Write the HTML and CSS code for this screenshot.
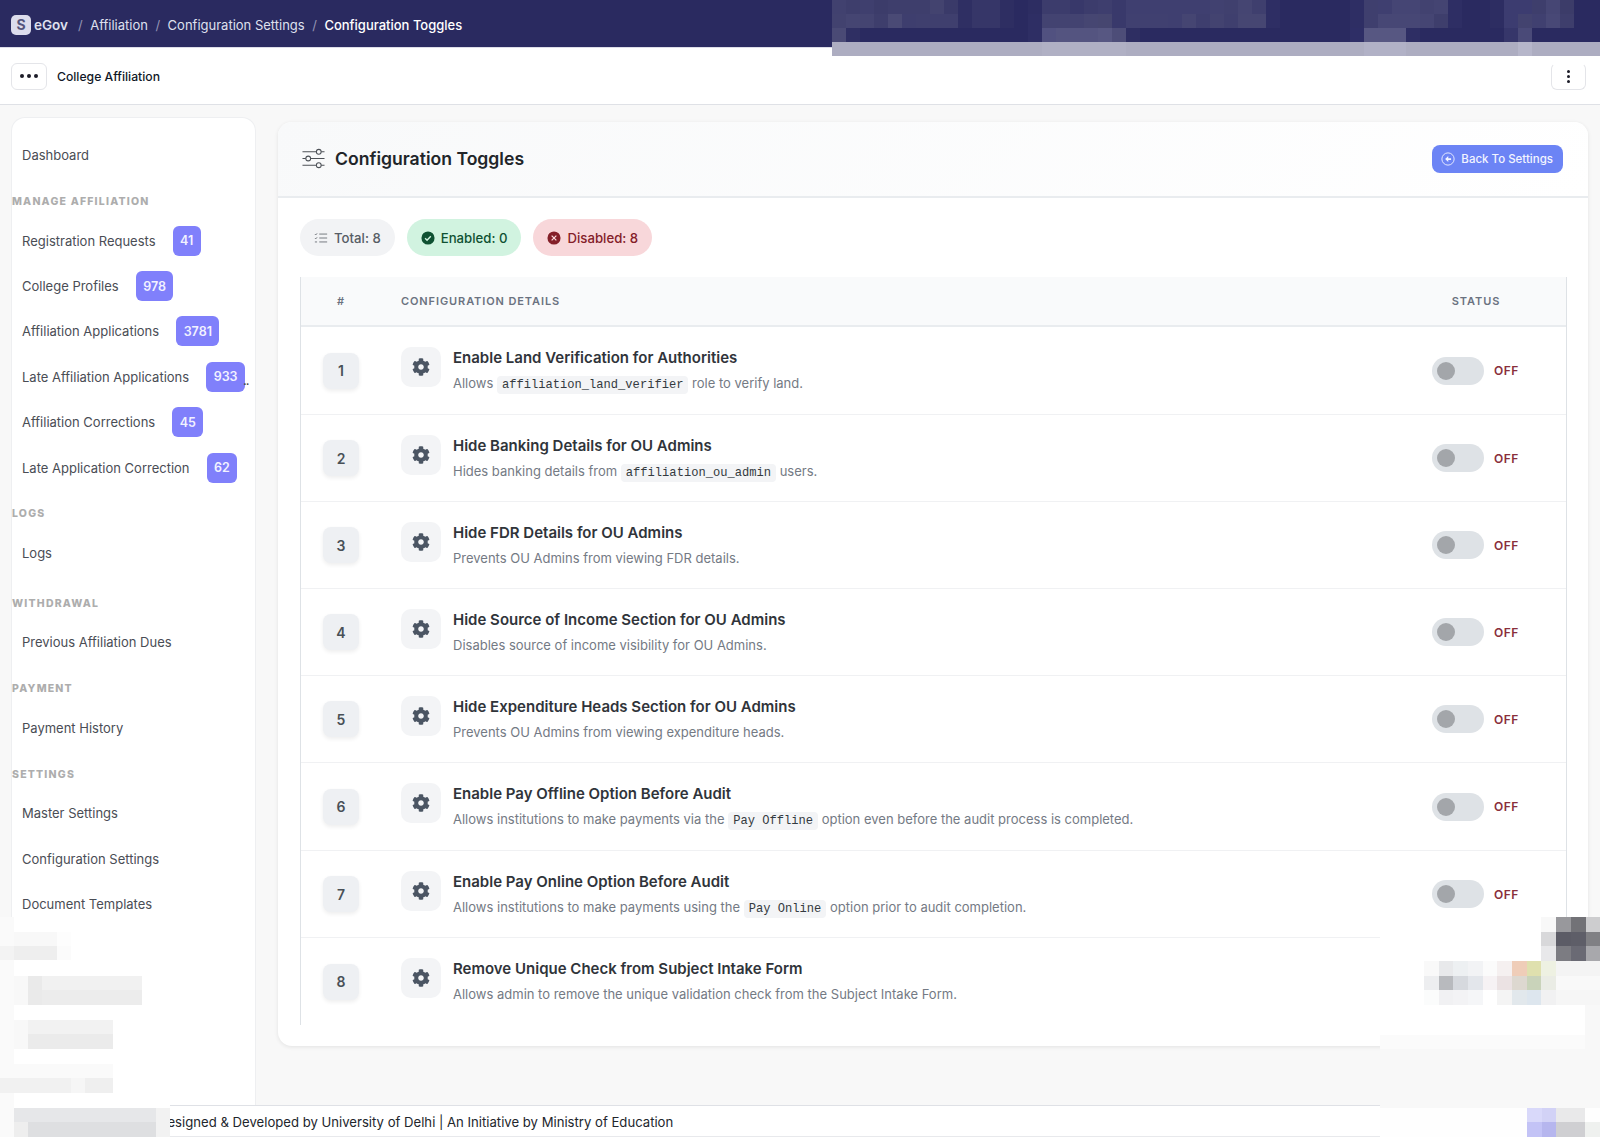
FILE: index.html
```html
<!DOCTYPE html>
<html lang="en">
<head>
<meta charset="utf-8">
<title>Configuration Toggles</title>
<link rel="stylesheet" href="styles.css">
</head>
<body>
<svg class="sprite" aria-hidden="true">
  <symbol id="gear" viewBox="0 0 512 512"><path fill="currentColor" fill-rule="evenodd" d="M487.4 315.7l-42.6-24.6c4.3-23.2 4.3-47 0-70.2l42.6-24.6c4.9-2.8 7.1-8.6 5.5-14-11.1-35.6-30-67.8-54.7-94.6-3.8-4.1-10-5.1-14.8-2.3L380.8 110c-17.9-15.4-38.5-27.3-60.8-35.1V25.8c0-5.6-3.9-10.5-9.4-11.7-36.7-8.2-74.3-7.8-109.2 0-5.5 1.2-9.4 6.1-9.4 11.7V75c-22.2 7.9-42.8 19.8-60.8 35.1L88.7 85.5c-4.9-2.8-11-1.9-14.8 2.3-24.7 26.7-43.6 58.9-54.7 94.6-1.7 5.4.6 11.2 5.5 14L67.3 221c-4.3 23.2-4.3 47 0 70.2l-42.6 24.6c-4.9 2.8-7.1 8.6-5.5 14 11.1 35.6 30 67.8 54.7 94.6 3.8 4.1 10 5.1 14.8 2.3l42.6-24.6c17.9 15.4 38.5 27.3 60.8 35.1v49.2c0 5.6 3.9 10.5 9.4 11.7 36.7 8.2 74.3 7.8 109.2 0 5.5-1.2 9.4-6.1 9.4-11.7v-49.2c22.2-7.9 42.8-19.8 60.8-35.1l42.6 24.6c4.9 2.8 11 1.9 14.8-2.3 24.7-26.7 43.6-58.9 54.7-94.6 1.5-5.5-.7-11.3-5.6-14.1zM256 336c-44.1 0-80-35.9-80-80s35.9-80 80-80 80 35.9 80 80-35.9 80-80 80z"/></symbol>
</svg>

<header class="topbar">
  <div class="brand"><span class="brand-mark">S</span><span class="brand-name">eGov</span></div>
  <nav class="crumbs">
    <span class="sep">/</span><span>Affiliation</span>
    <span class="sep">/</span><span>Configuration Settings</span>
    <span class="sep">/</span><span class="crumb-now">Configuration Toggles</span>
  </nav>
</header>

<div class="subbar">
  <button class="dots-btn"><i></i><i></i><i></i></button>
  <span class="app-name">College Affiliation</span>
  <button class="kebab-btn"><i></i><i></i><i></i></button>
</div>

<div class="shell">
  <aside class="sidebar">
    <a class="nav-item first">Dashboard</a>
    <div class="nav-head">MANAGE AFFILIATION</div>
    <a class="nav-item">Registration Requests<span class="badge">41</span></a>
    <a class="nav-item">College Profiles<span class="badge">978</span></a>
    <a class="nav-item">Affiliation Applications<span class="badge">3781</span></a>
    <a class="nav-item">Late Affiliation Applications<span class="badge">933</span><span class="more">..</span></a>
    <a class="nav-item">Affiliation Corrections<span class="badge">45</span></a>
    <a class="nav-item">Late Application Correction<span class="badge">62</span></a>
    <div class="nav-head">LOGS</div>
    <a class="nav-item">Logs</a>
    <div class="nav-head wide">WITHDRAWAL</div>
    <a class="nav-item">Previous Affiliation Dues</a>
    <div class="nav-head">PAYMENT</div>
    <a class="nav-item">Payment History</a>
    <div class="nav-head">SETTINGS</div>
    <a class="nav-item">Master Settings</a>
    <a class="nav-item">Configuration Settings</a>
    <a class="nav-item">Document Templates</a>
  </aside>

  <main class="content">
    <section class="card">
      <div class="card-head">
        <div class="card-title">
          <svg class="title-icon" viewBox="0 0 24 24" fill="none" stroke="currentColor" stroke-width="1.1"><path d="M0.5 5H15M20 5h3.5M0.5 12H4M9 12h14.500M0.500 19H15M20 19h3.500"/><circle cx="17.500" cy="5" r="2.500"/><circle cx="6.500" cy="12" r="2.500"/><circle cx="17.500" cy="19" r="2.500"/></svg>
          <h1>Configuration Toggles</h1>
        </div>
        <a class="back-btn">
          <svg viewBox="0 0 16 16" fill="none" stroke="currentColor" stroke-width="1"><circle cx="8" cy="8" r="7"/><path fill="currentColor" stroke="none" d="M8.300 4.700v2.300h3.200v2H8.300v2.300L4.700 8z"/></svg>
          Back To Settings
        </a>
      </div>
      <div class="card-body">
        <div class="pills">
          <span class="pill pill-total">
            <svg viewBox="0 0 16 16" fill="none" stroke="currentColor" stroke-width="1.100"><path d="M6 3.500h9M6 8h9M6 12.500h9M1 3.500l1 1 1.500-1.800M1 8l1 1 1.500-1.800M1 12.500h2.500" /></svg>
            Total: 8</span>
          <span class="pill pill-on">
            <svg viewBox="0 0 16 16"><circle cx="8" cy="8" r="7.500" fill="currentColor"/><path d="M4.700 8.300l2.200 2.200 4.300-4.500" fill="none" stroke="#d1f3e0" stroke-width="1.600"/></svg>
            Enabled: 0</span>
          <span class="pill pill-off">
            <svg viewBox="0 0 16 16"><circle cx="8" cy="8" r="7.500" fill="currentColor"/><path d="M5.300 5.300l5.400 5.400M10.700 5.300l-5.400 5.400" fill="none" stroke="#f8d7da" stroke-width="1.400"/></svg>
            Disabled: 8</span>
        </div>

        <div class="table">
          <div class="t-row t-head">
            <div class="c-num">#</div>
            <div class="c-detail">CONFIGURATION DETAILS</div>
            <div class="c-status">STATUS</div>
          </div>

          <div class="t-row h-88">
            <div class="c-num"><span class="num">1</span></div>
            <div class="c-detail"><span class="gear"><svg><use href="#gear"/></svg></span><div><h3>Enable Land Verification for Authorities</h3><p>Allows <code>affiliation_land_verifier</code> role to verify land.</p></div></div>
            <div class="c-status"><span class="switch"><i></i></span><b>OFF</b></div>
          </div>
          <div class="t-row">
            <div class="c-num"><span class="num">2</span></div>
            <div class="c-detail"><span class="gear"><svg><use href="#gear"/></svg></span><div><h3>Hide Banking Details for OU Admins</h3><p>Hides banking details from <code>affiliation_ou_admin</code> users.</p></div></div>
            <div class="c-status"><span class="switch"><i></i></span><b>OFF</b></div>
          </div>
          <div class="t-row">
            <div class="c-num"><span class="num">3</span></div>
            <div class="c-detail"><span class="gear"><svg><use href="#gear"/></svg></span><div><h3>Hide FDR Details for OU Admins</h3><p>Prevents OU Admins from viewing FDR details.</p></div></div>
            <div class="c-status"><span class="switch"><i></i></span><b>OFF</b></div>
          </div>
          <div class="t-row">
            <div class="c-num"><span class="num">4</span></div>
            <div class="c-detail"><span class="gear"><svg><use href="#gear"/></svg></span><div><h3>Hide Source of Income Section for OU Admins</h3><p>Disables source of income visibility for OU Admins.</p></div></div>
            <div class="c-status"><span class="switch"><i></i></span><b>OFF</b></div>
          </div>
          <div class="t-row">
            <div class="c-num"><span class="num">5</span></div>
            <div class="c-detail"><span class="gear"><svg><use href="#gear"/></svg></span><div><h3>Hide Expenditure Heads Section for OU Admins</h3><p>Prevents OU Admins from viewing expenditure heads.</p></div></div>
            <div class="c-status"><span class="switch"><i></i></span><b>OFF</b></div>
          </div>
          <div class="t-row h-88">
            <div class="c-num"><span class="num">6</span></div>
            <div class="c-detail"><span class="gear"><svg><use href="#gear"/></svg></span><div><h3>Enable Pay Offline Option Before Audit</h3><p>Allows institutions to make payments via the <code>Pay Offline</code> option even before the audit process is completed.</p></div></div>
            <div class="c-status"><span class="switch"><i></i></span><b>OFF</b></div>
          </div>
          <div class="t-row">
            <div class="c-num"><span class="num">7</span></div>
            <div class="c-detail"><span class="gear"><svg><use href="#gear"/></svg></span><div><h3>Enable Pay Online Option Before Audit</h3><p>Allows institutions to make payments using the <code>Pay Online</code> option prior to audit completion.</p></div></div>
            <div class="c-status"><span class="switch"><i></i></span><b>OFF</b></div>
          </div>
          <div class="t-row last">
            <div class="c-num"><span class="num">8</span></div>
            <div class="c-detail"><span class="gear"><svg><use href="#gear"/></svg></span><div><h3>Remove Unique Check from Subject Intake Form</h3><p>Allows admin to remove the unique validation check from the Subject Intake Form.</p></div></div>
            <div class="c-status"><span class="switch"><i></i></span><b>OFF</b></div>
          </div>
        </div>
      </div>
    </section>
  </main>
</div>

<footer class="footer">Designed &amp; Developed by University of Delhi | An Initiative by Ministry of Education</footer>

<svg class="mosaic m-top" viewBox="0 0 768 56" shape-rendering="crispEdges">
  <rect width="768" height="42" fill="#2a2a60"/>
  <rect y="42" width="768" height="14" fill="#adadc1"/>
  <rect x="210" y="42" width="84" height="14" fill="#b0b0c4"/><rect x="532" y="42" width="42" height="14" fill="#b1b1c6"/><rect x="686" y="42" width="14" height="14" fill="#b6b6ca"/>
  <g>
    <rect x="0" width="14" height="14" fill="#41416f"/><rect x="14" width="14" height="14" fill="#3e3e6c"/><rect x="28" width="14" height="14" fill="#3f3f6e"/><rect x="42" width="14" height="14" fill="#3c3c6a"/><rect x="56" width="42" height="14" fill="#3e3e6c"/><rect x="98" width="14" height="14" fill="#43436f"/><rect x="112" width="14" height="14" fill="#3a3a69"/><rect x="126" width="14" height="14" fill="#2f2f63"/><rect x="140" width="28" height="14" fill="#363668"/><rect x="168" width="14" height="14" fill="#2e2e62"/><rect x="196" width="14" height="14" fill="#2d2d62"/><rect x="210" width="28" height="14" fill="#3c3c6c"/><rect x="238" width="14" height="14" fill="#38386a"/><rect x="252" width="14" height="14" fill="#3c3c6c"/><rect x="266" width="14" height="14" fill="#3e3e6e"/><rect x="280" width="14" height="14" fill="#39396b"/><rect x="294" width="84" height="14" fill="#3f3f70"/><rect x="378" width="14" height="14" fill="#414170"/><rect x="392" width="14" height="14" fill="#40406e"/><rect x="406" width="14" height="14" fill="#454572"/><rect x="420" width="14" height="14" fill="#3f3f6e"/><rect x="434" width="14" height="14" fill="#2e2e64"/><rect x="518" width="14" height="14" fill="#2e2e64"/><rect x="532" width="14" height="14" fill="#3f3f6e"/><rect x="546" width="14" height="14" fill="#3f3f70"/><rect x="560" width="28" height="14" fill="#454574"/><rect x="588" width="14" height="14" fill="#424270"/><rect x="602" width="14" height="14" fill="#444472"/><rect x="616" width="14" height="14" fill="#2e2e64"/><rect x="658" width="14" height="14" fill="#2d2d62"/><rect x="672" width="28" height="14" fill="#3c3c70"/><rect x="700" width="14" height="14" fill="#3e3e6c"/><rect x="714" width="14" height="14" fill="#464674"/><rect x="728" width="14" height="14" fill="#3c3c69"/>
  </g>
  <g>
    <rect x="0" y="14" width="14" height="14" fill="#42426f"/><rect x="14" y="14" width="14" height="14" fill="#454572"/><rect x="28" y="14" width="14" height="14" fill="#444471"/><rect x="42" y="14" width="14" height="14" fill="#3e3e6c"/><rect x="56" y="14" width="14" height="14" fill="#4a4a75"/><rect x="70" y="14" width="14" height="14" fill="#3e3e6e"/><rect x="84" y="14" width="42" height="14" fill="#3f3f6e"/><rect x="126" y="14" width="14" height="14" fill="#2f2f63"/><rect x="140" y="14" width="28" height="14" fill="#363668"/><rect x="168" y="14" width="14" height="14" fill="#2e2e62"/><rect x="196" y="14" width="14" height="14" fill="#2e2e64"/><rect x="210" y="14" width="42" height="14" fill="#434371"/><rect x="252" y="14" width="14" height="14" fill="#464672"/><rect x="266" y="14" width="14" height="14" fill="#464670"/><rect x="280" y="14" width="14" height="14" fill="#39396b"/><rect x="294" y="14" width="42" height="14" fill="#404070"/><rect x="336" y="14" width="14" height="14" fill="#3f3f70"/><rect x="350" y="14" width="14" height="14" fill="#454572"/><rect x="364" y="14" width="14" height="14" fill="#3e3e6e"/><rect x="378" y="14" width="14" height="14" fill="#434370"/><rect x="392" y="14" width="14" height="14" fill="#3f3f6e"/><rect x="406" y="14" width="28" height="14" fill="#464672"/><rect x="434" y="14" width="14" height="14" fill="#2e2e64"/><rect x="518" y="14" width="14" height="14" fill="#2e2e64"/><rect x="532" y="14" width="14" height="14" fill="#3f3f6e"/><rect x="546" y="14" width="42" height="14" fill="#474775"/><rect x="588" y="14" width="14" height="14" fill="#454573"/><rect x="602" y="14" width="14" height="14" fill="#3e3e6c"/><rect x="616" y="14" width="14" height="14" fill="#2e2e64"/><rect x="658" y="14" width="14" height="14" fill="#2d2d62"/><rect x="672" y="14" width="14" height="14" fill="#3c3c70"/><rect x="686" y="14" width="14" height="14" fill="#43436f"/><rect x="700" y="14" width="14" height="14" fill="#404070"/><rect x="714" y="14" width="14" height="14" fill="#484876"/><rect x="728" y="14" width="14" height="14" fill="#3e3e6c"/>
  </g>
  <g>
    <rect x="0" y="28" width="14" height="14" fill="#4a4a75"/><rect x="14" y="28" width="14" height="14" fill="#2f2f63"/><rect x="196" y="28" width="14" height="14" fill="#2e2e64"/><rect x="210" y="28" width="14" height="14" fill="#515180"/><rect x="224" y="28" width="42" height="14" fill="#545480"/><rect x="266" y="28" width="14" height="14" fill="#575782"/><rect x="280" y="28" width="14" height="14" fill="#4d4d78"/><rect x="294" y="28" width="14" height="14" fill="#2e2e62"/><rect x="518" y="28" width="14" height="14" fill="#2e2e66"/><rect x="532" y="28" width="42" height="14" fill="#575782"/><rect x="574" y="28" width="14" height="14" fill="#2e2e64"/><rect x="672" y="28" width="14" height="14" fill="#36366a"/><rect x="686" y="28" width="14" height="14" fill="#4a4a78"/>
  </g>
</svg>
<svg class="mosaic m-left" viewBox="0 0 170 220" shape-rendering="crispEdges">
  <rect width="170" height="220" fill="#fff"/>
  <rect width="14" height="220" fill="#fafafa"/>
  <rect x="14" y="15" width="43" height="14" fill="#f8f8f8"/>
  <rect x="57" y="15" width="14" height="14" fill="#fdfdfd"/>
  <rect y="29" width="14" height="14" fill="#f3f3f3"/>
  <rect x="14" y="29" width="14" height="14" fill="#eeeeee"/>
  <rect x="28" y="29" width="29" height="14" fill="#eeeeee"/>
  <rect x="57" y="29" width="14" height="14" fill="#fbfbfb"/>
  <rect x="14" y="59" width="14" height="29" fill="#f8f8f8"/>
  <rect x="28" y="59" width="14" height="29" fill="#eaeaea"/>
  <rect x="42" y="59" width="100" height="14" fill="#f1f1f1"/>
  <rect x="42" y="73" width="100" height="15" fill="#ececec"/>
  <rect x="14" y="103" width="14" height="29" fill="#f8f8f8"/>
  <rect x="28" y="103" width="85" height="14" fill="#f2f2f2"/>
  <rect x="28" y="117" width="85" height="15" fill="#ebebeb"/>
  <rect y="147" width="113" height="14" fill="#fafafa"/>
  <rect y="161" width="71" height="15" fill="#f1f1f1"/>
  <rect x="71" y="161" width="14" height="15" fill="#f6f6f6"/>
  <rect x="85" y="161" width="28" height="15" fill="#efefef"/>
  <rect x="14" y="191" width="142" height="14" fill="#e6e7e9"/>
  <rect x="14" y="205" width="14" height="15" fill="#eeeeee"/>
  <rect x="28" y="205" width="128" height="15" fill="#dedfe1"/>
  <rect x="156" y="191" width="14" height="29" fill="#f2f2f2"/>
</svg>
<svg class="mosaic m-right" viewBox="0 0 220 220" shape-rendering="crispEdges">
  <rect width="205" height="132" fill="#fff"/>
  <rect x="205" width="15" height="132" fill="#f8f8f8"/>
  <rect y="118" width="205" height="14" fill="#fbfbfb"/>
  <rect y="132" width="220" height="59" fill="#f8f8f8"/>
  <rect y="191" width="220" height="29" fill="#fefefe"/>
  <rect x="147" y="191" width="15" height="14" fill="#d9d9fa"/><rect x="162" y="191" width="14" height="14" fill="#d2d2f6"/><rect x="176" y="191" width="29" height="14" fill="#e9e9ea"/>
  <rect x="147" y="205" width="15" height="15" fill="#c3c3f6"/><rect x="162" y="205" width="14" height="15" fill="#b6b6ee"/><rect x="176" y="205" width="29" height="15" fill="#cfcfd2"/><rect x="205" y="205" width="15" height="15" fill="#eff1ef"/>
  <rect x="161" y="0" width="15" height="15" fill="#f8f8f8"/><rect x="176" y="0" width="15" height="15" fill="#98989c"/><rect x="191" y="0" width="15" height="15" fill="#727277"/><rect x="206" y="0" width="14" height="15" fill="#cdcdcf"/>
  <rect x="161" y="15" width="15" height="14" fill="#d8d8da"/><rect x="176" y="15" width="15" height="14" fill="#5c5c66"/><rect x="191" y="15" width="15" height="14" fill="#5e5e68"/><rect x="206" y="15" width="14" height="14" fill="#808084"/>
  <rect x="161" y="29" width="15" height="15" fill="#e8e8ea"/><rect x="176" y="29" width="15" height="15" fill="#7c7c82"/><rect x="191" y="29" width="15" height="15" fill="#6a6a74"/><rect x="206" y="29" width="14" height="15" fill="#a8a8ac"/>
  <rect x="44" y="44" width="15" height="15" fill="#f9f9f9"/><rect x="59" y="44" width="14" height="15" fill="#e8e9eb"/><rect x="73" y="44" width="15" height="15" fill="#edf0f2"/><rect x="88" y="44" width="15" height="15" fill="#f2f3f5"/><rect x="103" y="44" width="14" height="15" fill="#fbfbfb"/><rect x="117" y="44" width="15" height="15" fill="#f5f0f0"/><rect x="132" y="44" width="15" height="15" fill="#efcdb8"/><rect x="147" y="44" width="14" height="15" fill="#dfe0ae"/><rect x="161" y="44" width="15" height="15" fill="#eef1e2"/><rect x="176" y="44" width="44" height="15" fill="#f4f4f4"/>
  <rect x="44" y="59" width="15" height="14" fill="#edeef0"/><rect x="59" y="59" width="14" height="14" fill="#b8babe"/><rect x="73" y="59" width="15" height="14" fill="#d6d9de"/><rect x="88" y="59" width="15" height="14" fill="#e3e6eb"/><rect x="103" y="59" width="14" height="14" fill="#f6f2f4"/><rect x="117" y="59" width="15" height="14" fill="#ebe2e3"/><rect x="132" y="59" width="15" height="14" fill="#ddd8d0"/><rect x="147" y="59" width="14" height="14" fill="#c9d3ba"/><rect x="161" y="59" width="15" height="14" fill="#eaece5"/><rect x="176" y="59" width="44" height="14" fill="#f9f9f9"/>
  <rect x="44" y="73" width="15" height="15" fill="#fbfcfc"/><rect x="59" y="73" width="14" height="15" fill="#f1f1f3"/><rect x="73" y="73" width="15" height="15" fill="#f3f3f5"/><rect x="88" y="73" width="15" height="15" fill="#f5f6f8"/><rect x="117" y="73" width="15" height="15" fill="#f4f4f4"/><rect x="132" y="73" width="15" height="15" fill="#e2e8ec"/><rect x="147" y="73" width="14" height="15" fill="#dde6ee"/><rect x="161" y="73" width="15" height="15" fill="#f1f1f2"/><rect x="176" y="73" width="44" height="15" fill="#f6f6f6"/>
</svg>
```
FILE: styles.css
```css
* { box-sizing: border-box; }
html, body { margin: 0; height: 100%; }
body {
  width: 1600px;
  height: 1137px;
  overflow: hidden;
  position: relative;
  background: #f8f8f8;
  font-family: Inter, "Noto Sans", sans-serif;
  color: #212529;
  display: flex;
  flex-direction: column;
}
.sprite { display: none; }

.topbar {
  height: 48px;
  flex: none;
  background: #2a2a60;
  border-bottom: 1px solid #dcdce8;
  display: flex;
  align-items: center;
  padding: 2px 0 0 11px;
  color: #dfe0ee;
  font-size: 13px;
}
.brand { display: flex; align-items: center; gap: 3px; }
.brand-mark {
  width: 20px;
  height: 20px;
  border-radius: 5px;
  background: #dcdcec;
  color: #55557c;
  font-weight: 700;
  font-size: 14px;
  display: flex;
  align-items: center;
  justify-content: center;
}
.brand-name { font-weight: 600; font-size: 13.500px; }
.crumbs { margin-left: 10px; display: flex; align-items: center; gap: 7.500px; white-space: nowrap; }
.sep { color: #9494b4; }
.crumb-now { color: #fff; font-weight: 500; }

.subbar {
  height: 57px;
  flex: none;
  background: #fff;
  border-bottom: 1px solid #dfe1e6;
  display: flex;
  align-items: center;
  padding: 0 14px 0 11px;
}
.dots-btn, .kebab-btn {
  width: 36px;
  height: 27px;
  background: #fff;
  border: 1px solid #e4e5e9;
  border-radius: 6px;
  padding: 0;
  display: flex;
  align-items: center;
  justify-content: center;
  gap: 3px;
}
.dots-btn i { width: 4px; height: 4px; border-radius: 50%; background: #1c1c28; }
.kebab-btn i { width: 3px; height: 3px; border-radius: 50%; background: #1c1c28; }
.kebab-btn { flex-direction: column; gap: 2px; margin-left: auto; width: 35px; border-top-color: transparent; }
.app-name { margin-left: 10px; font-size: 12.200px; font-weight: 500; color: #111827; }

.shell { flex: 1; min-height: 0; display: flex; padding-left: 11px; }
.sidebar {
  width: 245px;
  flex: none;
  margin-top: 12px;
  background: #fff;
  border: 1px solid #eeeff1;
  border-bottom: 0;
  border-radius: 14px 14px 0 0;
  padding-top: 14px;
}
.nav-item {
  display: flex;
  align-items: center;
  height: 45.400px;
  padding-left: 10px;
  font-size: 13px;
  color: #4a4d55;
  white-space: nowrap;
}
.first { height: 45px; margin-bottom: 19px; }
.nav-head {
  height: 12px;
  margin: 18px 0 10px 0;
  font-size: 10.500px;
  line-height: 12px;
  font-weight: 800;
  letter-spacing: 1.200px;
  color: #adadad;
}
.nav-head.wide { margin-top: 22px; }
.badge {
  margin-left: 17px;
  height: 30px;
  padding: 0 7.500px;
  border-radius: 6px;
  background: #8080fb;
  color: #f2f2ff;
  font-size: 12.500px;
  font-weight: 600;
  display: flex;
  align-items: center;
}
.more { font-size: 13px; margin-left: -2px; color: #444; padding-top: 6px; letter-spacing: -1px; }

.content { flex: 1; min-width: 0; padding: 17px 12px 0 22px; }
.card {
  width: 1310px;
  height: 924px;
  background: #fff;
  border-radius: 14px;
  box-shadow: 0 1px 4px rgba(0,0,0,.09);
  overflow: hidden;
}
.card-head {
  height: 76px;
  background: linear-gradient(135deg, #f8f9fa, #fff);
  border-bottom: 2px solid #e9ecef;
  display: flex;
  align-items: center;
  justify-content: space-between;
  padding: 0 25px 0 24px;
}
.card-title { display: flex; align-items: center; gap: 10px; padding-bottom: 2px; }
.title-icon { width: 23px; height: 23px; color: #4d5157; }
h1 { margin: 0; font-size: 17.600px; font-weight: 600; color: #212529; }
.back-btn {
  height: 28px;
  padding: 0 10px 0 9px;
  background: #6c84f5;
  border-radius: 8px;
  color: #f3f5ff;
  font-size: 11.500px;
  font-weight: 500;
  display: flex;
  align-items: center;
  gap: 6px;
}
.back-btn svg { width: 14px; height: 14px; }

.card-body { padding: 21px 20px 0 22px; }
.pills { display: flex; gap: 12px; }
.pill {
  height: 37px;
  padding: 0 14px;
  border-radius: 19px;
  display: flex;
  align-items: center;
  gap: 6px;
  font-size: 13.200px;
  font-weight: 500;
}
.pill svg { width: 14px; height: 14px; }
.pill-total { background: #f2f3f5; color: #575d65; }
.pill-on { background: #d1f3e0; color: #0f5132; padding-right: 13px; }
.pill-off { background: #f8d7da; color: #842029; gap: 7px; }
.pill-total svg { color: #74787e; }

.table {
  margin-top: 21px;
  width: 1267px;
  border-left: 1px solid #dee2e6;
  border-right: 1px solid #dee2e6;
}
.t-row {
  display: grid;
  grid-template-columns: 80px 1fr 180px;
  height: 87px;
  border-bottom: 1px solid #f0f1f3;
}
.h-88 { height: 88px; }
.last { height: 87px; border-bottom: 0; }
.t-head {
  height: 50px;
  background: #f9fafb;
  border-bottom: 2px solid #e9ecef;
  align-items: center;
  font-size: 11px;
  font-weight: 600;
  letter-spacing: .9px;
  color: #6b7280;
}
.t-head .c-num { text-align: center; padding: 0; display: block; }
.t-head .c-detail { padding: 0 0 0 20px; display: block; }
.t-head .c-status { padding: 0; display: block; text-align: center; }
.c-num { display: flex; align-items: center; justify-content: center; }
.num {
  width: 36px;
  height: 36px;
  border-radius: 8px;
  background: #eef0f3;
  box-shadow: 0 2px 4px rgba(0,0,0,.07);
  color: #495057;
  font-size: 14px;
  font-weight: 600;
  display: flex;
  align-items: center;
  justify-content: center;
}
.c-detail { display: flex; gap: 12px; padding: 20px 0 0 20px; }
.gear {
  width: 40px;
  height: 40px;
  flex: none;
  border-radius: 10px;
  background: #f3f4f6;
  color: #4b5563;
  display: flex;
  align-items: center;
  justify-content: center;
}
.gear svg { width: 18px; height: 18px; }
h3 { margin: 0; font-size: 15px; line-height: 22px; font-weight: 600; color: #30343a; }
p { margin: 3px 0 0; font-size: 13px; line-height: 22px; color: #747a84; white-space: nowrap; }
code {
  font-family: "Liberation Mono", monospace;
  font-size: 12.100px;
  color: #343a40;
  background: #f3f4f6;
  border-radius: 4px;
  padding: 2px 5px;
}
.c-status { display: flex; align-items: center; padding: 0 0 0 46px; gap: 10px; }
.c-status b { font-size: 12px; font-weight: 600; letter-spacing: .5px; color: #8a2f3b; }
.switch {
  width: 52px;
  height: 28px;
  border-radius: 14px;
  background: #dee2e6;
  display: flex;
  align-items: center;
  padding-left: 5px;
}
.switch i { width: 18px; height: 18px; border-radius: 50%; background: #a3a6aa; }

.footer {
  height: 32px;
  flex: none;
  background: #fff;
  border-top: 1px solid #dfe1e6;
  border-bottom: 1px solid #e8e9ec;
  display: flex;
  align-items: center;
  padding: 2px 0 0 158px;
  font-size: 13.130px;
  color: #22262c;
}

.mosaic { position: absolute; display: block; }
.m-top { left: 832px; top: 0; width: 768px; height: 56px; }
.m-left { left: 0; top: 917px; width: 170px; height: 220px; }
.m-right { left: 1380px; top: 917px; width: 220px; height: 220px; }
```
